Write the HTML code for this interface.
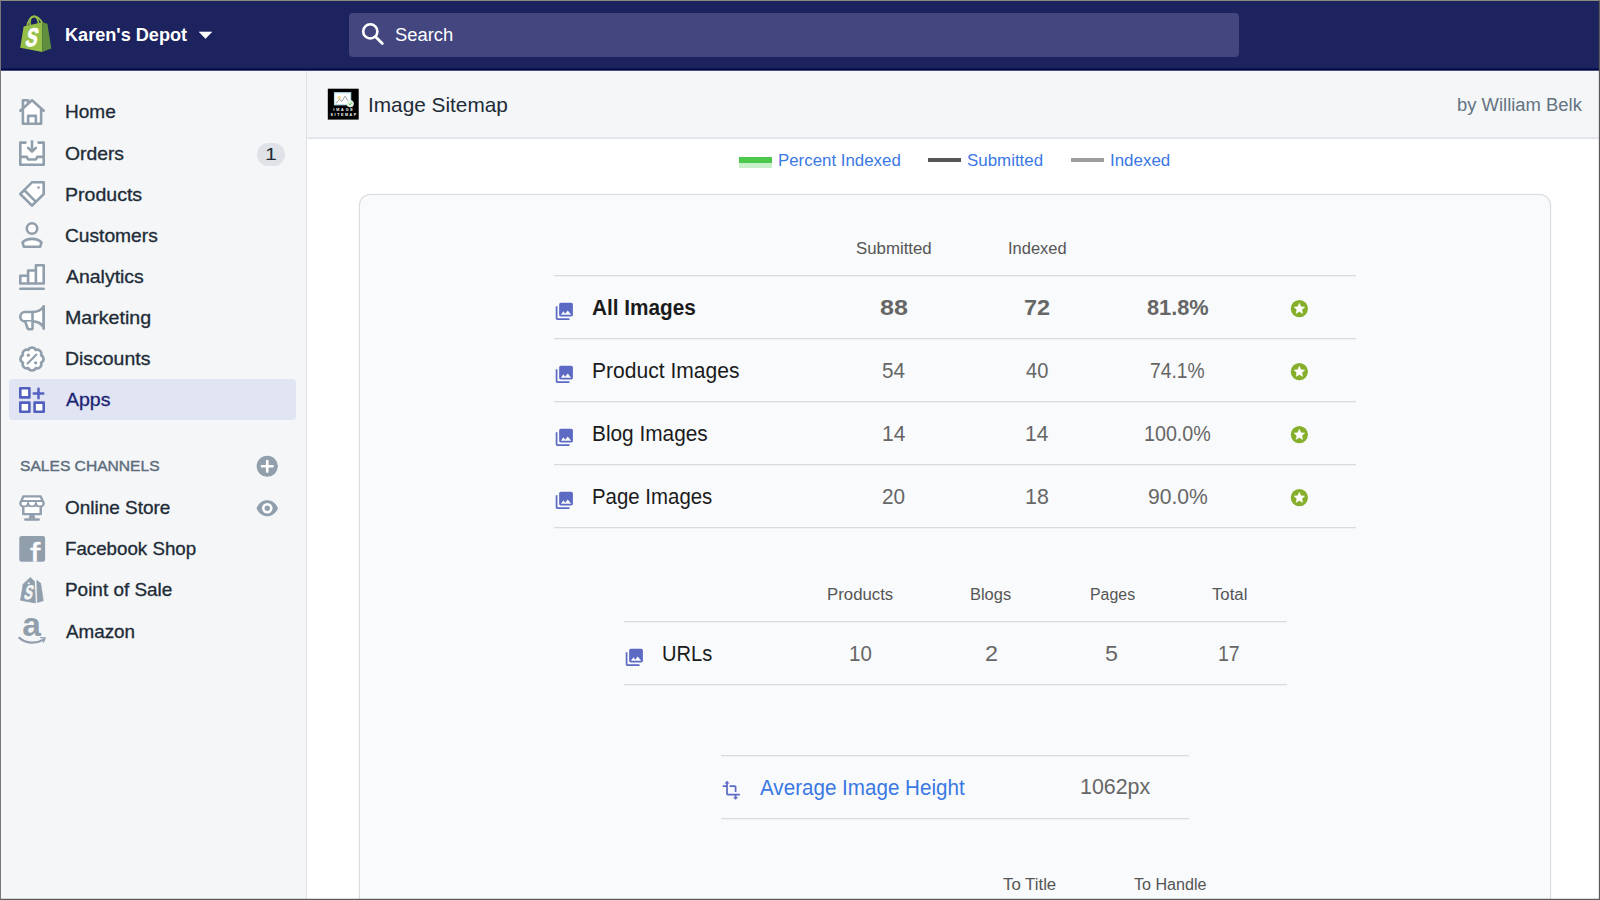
<!DOCTYPE html>
<html lang="en">
<head>
<meta charset="utf-8">
<title>Image Sitemap</title>
<style>
*{box-sizing:border-box;margin:0;padding:0}
html,body{width:1600px;height:900px;overflow:hidden;background:#fff}
body{font-family:"Liberation Sans",sans-serif;color:#212b36;position:relative}
.a{position:absolute}
.t{position:absolute;white-space:nowrap;line-height:1;transform-origin:0 0}
.hl{position:absolute;height:2px;background:linear-gradient(#d9dbde 0 50%,#f0f1f3 50% 100%)}
svg{position:absolute;overflow:visible}
</style>
</head>
<body>
<div class="a" style="left:0px;top:0px;width:1600px;height:70px;background:#1c235e;"></div>
<div class="a" style="left:349px;top:13px;width:890px;height:44px;background:#43467f;border-radius:4px"></div>
<div class="a" style="left:0px;top:70px;width:306px;height:830px;background:#f4f6f8;"></div>
<div class="a" style="left:306px;top:70px;width:1px;height:830px;background:#dfe3e8;"></div>
<div class="a" style="left:307px;top:70px;width:1293px;height:67px;background:#f4f6f8;"></div>
<div class="a" style="left:307px;top:137px;width:1293px;height:1px;background:#e6e9ed;"></div>
<div class="a" style="left:307px;top:138px;width:1293px;height:1px;background:#dfe3e8;"></div>
<div class="a" style="left:0px;top:68px;width:1600px;height:1px;background:#10164f;"></div>
<div class="a" style="left:0px;top:69px;width:1600px;height:1px;background:#02074a;"></div>
<div class="a" style="left:0px;top:70px;width:1600px;height:1px;background:#4b4f7e;"></div>
<div class="a" style="left:359px;top:194px;width:1192px;height:720px;background:#f9fafb;border:1px solid #d9dadc;border-radius:11.5px;box-shadow:0 0 1.2px rgba(0,0,0,.13)"></div>
<div class="t" style="left:65.13px;top:26.00px;font-size:18px;color:#fff;font-weight:bold;transform:scaleX(1.0065);">Karen's Depot</div>
<svg style="left:198px;top:31px" width="15" height="8" viewBox="0 0 15 8"><path d="M1.2 0.9H13.8L7.5 7.6Z" fill="#fff" stroke="#fff" stroke-width="0.5" stroke-linejoin="round"/></svg>
<div class="t" style="left:395.43px;top:25.76px;font-size:18px;color:#fff;transform:scaleX(1.0203);">Search</div>
<svg style="left:360px;top:21px" width="26" height="26" viewBox="0 0 26 26"><circle cx="10.3" cy="10.4" r="7.1" fill="none" stroke="#fff" stroke-width="2.6"/><path d="M15.6 15.8L22.3 22.6" stroke="#fff" stroke-width="2.8" stroke-linecap="round"/></svg>
<svg style="left:18px;top:13px" width="36" height="42" viewBox="18 13 36 42">
<path d="M31 27.5C28.5 20 31 16.3 33.8 16.3C36.8 16.3 38.4 20 38.6 24.8" fill="none" stroke="#95bf47" stroke-width="1.7"/>
<path d="M27.2 27C27.5 21 31 15.8 35 16.4C38.5 17 41 20.5 42.6 23.5" fill="none" stroke="#95bf47" stroke-width="1.7"/>
<path d="M23.6 26.6L42.2 22.3L42.2 51.9L20.2 47.7Z" fill="#95bf47"/>
<path d="M42.2 22.3L47.4 23.8L51.3 48.6L42.2 51.9Z" fill="#5e8e3e"/>
<text transform="translate(24.6,45.9) skewX(-13) scale(0.68,1)" font-family="Liberation Sans, sans-serif" font-size="25.6" font-weight="bold" fill="#fff" stroke="#fff" stroke-width="0.9">S</text>
</svg>
<div class="a" style="left:9px;top:379px;width:287px;height:41px;background:#e1e4f2;border-radius:4px"></div>
<div class="t" style="left:64.59px;top:103.71px;font-size:17.7px;color:#212b36;transform:scaleX(1.0751);-webkit-text-stroke:0.3px #212b36;">Home</div>
<div class="t" style="left:65.32px;top:145.98px;font-size:17.7px;color:#212b36;transform:scaleX(1.0918);-webkit-text-stroke:0.3px #212b36;">Orders</div>
<div class="t" style="left:65.00px;top:186.94px;font-size:17.7px;color:#212b36;transform:scaleX(1.1049);-webkit-text-stroke:0.3px #212b36;">Products</div>
<div class="t" style="left:65.06px;top:227.99px;font-size:17.7px;color:#212b36;transform:scaleX(1.0845);-webkit-text-stroke:0.3px #212b36;">Customers</div>
<div class="t" style="left:65.90px;top:269.38px;font-size:17.7px;color:#212b36;transform:scaleX(1.0992);-webkit-text-stroke:0.3px #212b36;">Analytics</div>
<div class="t" style="left:65.08px;top:309.98px;font-size:17.7px;color:#212b36;transform:scaleX(1.1083);-webkit-text-stroke:0.3px #212b36;">Marketing</div>
<div class="t" style="left:64.90px;top:350.94px;font-size:17.7px;color:#212b36;transform:scaleX(1.0994);-webkit-text-stroke:0.3px #212b36;">Discounts</div>
<div class="t" style="left:65.90px;top:392.47px;font-size:17.7px;color:#1c2573;transform:scaleX(1.1030);-webkit-text-stroke:0.3px #1c2573;">Apps</div>
<div class="a" style="left:257px;top:143px;width:28px;height:23px;background:#dfe3e8;border-radius:12px"></div>
<div class="t" style="left:264.93px;top:146.46px;font-size:16.5px;color:#212b36;transform:scaleX(1.2855);">1</div>
<div class="t" style="left:19.71px;top:457.57px;font-size:15.3px;color:#5c6c7c;transform:scaleX(1.0195);-webkit-text-stroke:0.4px #5c6c7c;">SALES CHANNELS</div>
<div class="t" style="left:65.34px;top:499.68px;font-size:17.7px;color:#212b36;transform:scaleX(1.0718);-webkit-text-stroke:0.3px #212b36;">Online Store</div>
<div class="t" style="left:65.06px;top:541.18px;font-size:17.7px;color:#212b36;transform:scaleX(1.0585);-webkit-text-stroke:0.3px #212b36;">Facebook Shop</div>
<div class="t" style="left:64.68px;top:582.10px;font-size:17.7px;color:#212b36;transform:scaleX(1.0701);-webkit-text-stroke:0.3px #212b36;">Point of Sale</div>
<div class="t" style="left:65.90px;top:623.63px;font-size:17.7px;color:#212b36;transform:scaleX(1.0634);-webkit-text-stroke:0.3px #212b36;">Amazon</div>
<svg style="left:19.3px;top:98.7px" width="26" height="26" viewBox="0 0 20 20"><path fill="#fff" d="M3 8L10 1.5L17 8V19H3Z"/><path fill="#919eab" fill-rule="evenodd" d="M19.664 8.252l-9-8a1 1 0 0 0-1.328 0L8 1.44V1a1 1 0 0 0-1-1H3a1 1 0 0 0-1 1v5.773L.336 8.252a1.001 1.001 0 0 0 1.328 1.496L2 9.449V19a1 1 0 0 0 1 1h14a1 1 0 0 0 1-1V9.449l.336.299a.997.997 0 0 0 1.411-.083 1.001 1.001 0 0 0-.083-1.413zM16 18h-2v-5a1 1 0 0 0-1-1H7a1 1 0 0 0-1 1v5H4V7.671l6-5.333 6 5.333V18zm-8 0v-4h4v4H8zM4 2h2v1.218L4 4.996V2z"/></svg>
<svg style="left:19.3px;top:140px" width="26" height="26" viewBox="0 0 20 20"><path fill="#fff" d="M1 2H19V19H1Z"/><path fill="#919eab" fill-rule="evenodd" d="M2 18v-4h3.382l.723 1.447c.17.339.516.553.895.553h6c.379 0 .725-.214.895-.553L14.618 14H18v4H2zM19 1a1 1 0 0 1 1 1v17a1 1 0 0 1-1 1H1a1 1 0 0 1-1-1V2a1 1 0 0 1 1-1h4a1 1 0 0 1 0 2H2v9h4c.379 0 .725.214.895.553L7.618 14h4.764l.723-1.447c.17-.339.516-.553.895-.553h4V3h-3a1 1 0 0 1 0-2h4zM6.293 6.707a.999.999 0 1 1 1.414-1.414L9 6.586V1a1 1 0 0 1 2 0v5.586l1.293-1.293a.999.999 0 1 1 1.414 1.414l-3 3a.997.997 0 0 1-1.414 0l-3-3z"/></svg>
<svg style="left:19.3px;top:181.2px" width="26" height="26" viewBox="0 0 20 20"><path fill="#fff" d="M10 1H19V10L10 19L1 10Z"/><path fill="#919eab" fill-rule="evenodd" d="M19 0h-9c-.265 0-.52.106-.707.293l-9 9a.999.999 0 0 0 0 1.414l9 9a.997.997 0 0 0 1.414 0l9-9A.997.997 0 0 0 20 10V1a1 1 0 0 0-1-1zm-9 17.586L2.414 10 4 8.414 11.586 16 10 17.586zm8-8l-5 5L5.414 7l5-5H18v7.586zM15 6a1 1 0 1 0 0-2 1 1 0 0 0 0 2"/></svg>
<svg style="left:19.3px;top:222.4px" width="26" height="26" viewBox="0 0 20 20"><circle cx="10" cy="5" r="4" fill="#fff" stroke="#919eab" stroke-width="2"/><path d="M2.7 15.7C4.6 13.7 7 13 10 13S15.4 13.7 17.3 15.7L16.3 19H3.7Z" fill="#fff" stroke="#919eab" stroke-width="2" stroke-linecap="round" stroke-linejoin="round" /></svg>
<svg style="left:19.3px;top:263.7px" width="26" height="26" viewBox="0 0 20 20"><path fill="#fff" d="M1 9H7V5H13V1H19V15H1Z"/><path fill="#919eab" fill-rule="evenodd" d="M19 18a1 1 0 0 1 0 2H1a1 1 0 0 1 0-2h18zm0-18a1 1 0 0 1 1 1v14a1 1 0 0 1-1 1H1a1 1 0 0 1-1-1V9a1 1 0 0 1 1-1h5V5a1 1 0 0 1 1-1h5V1a1 1 0 0 1 1-1h6zM2 14h4v-4H2v4zm6 0h4V6H8v8zm6 0h4V2h-4v12z"/></svg>
<svg style="left:19.3px;top:305px" width="26" height="26" viewBox="0 0 20 20"><path d="M10.4 5.4H4.6a3.6 3.6 0 0 0 0 7.2H10.4C13.8 12.6 16.8 13.8 19 17V1.4C16.8 4.4 13.8 5.4 10.4 5.4Z" fill="#fff" stroke="#919eab" stroke-width="2" stroke-linecap="round" stroke-linejoin="round" /><path d="M10.4 5.4V12.6" fill="none" stroke="#919eab" stroke-width="2" stroke-linecap="round" stroke-linejoin="round" /><path d="M4.8 12.8L6.6 17.9a1 1 0 0 0 .95 .7H9.4a1 1 0 0 0 1-1V12.6" fill="#fff" stroke="#919eab" stroke-width="2" stroke-linecap="round" stroke-linejoin="round" /><path d="M19 1V18.2" fill="none" stroke="#919eab" stroke-width="2" stroke-linecap="round" stroke-linejoin="round" /></svg>
<svg style="left:19.3px;top:346.1px" width="26" height="26" viewBox="0 0 20 20"><path d="M12.87 3.07A3.1 3.1 0 0 1 16.93 7.13A3.1 3.1 0 0 1 16.93 12.87A3.1 3.1 0 0 1 12.87 16.93A3.1 3.1 0 0 1 7.13 16.93A3.1 3.1 0 0 1 3.07 12.87A3.1 3.1 0 0 1 3.07 7.13A3.1 3.1 0 0 1 7.13 3.07A3.1 3.1 0 0 1 12.87 3.07Z" fill="#fff" stroke="#919eab" stroke-width="2" stroke-linecap="round" stroke-linejoin="round" /><path d="M6.6 13.4L13.4 6.6" fill="none" stroke="#919eab" stroke-width="1.7" stroke-linecap="round" stroke-linejoin="round" /><circle cx="7.2" cy="7.1" r="1.25" fill="#919eab"/><circle cx="12.8" cy="12.9" r="1.25" fill="#919eab"/></svg>
<svg style="left:19.3px;top:387.1px" width="26" height="26" viewBox="0 0 20 20"><g fill="#fff" stroke="#5360c0" stroke-width="2" stroke-linejoin="round"><rect x="1" y="1" width="7" height="7"/><rect x="1" y="12" width="7" height="7"/><rect x="12" y="12" width="7" height="7"/></g><path d="M11.3 5H18.7M15 1.3V8.7" fill="none" stroke="#5360c0" stroke-width="1.9" stroke-linecap="round" stroke-linejoin="round" /></svg>
<svg style="left:254.15px;top:453.35px" width="26.5" height="26.5" viewBox="0 0 20 20"><path fill="#919eab" d="M10 2a8 8 0 1 0 0 16 8 8 0 0 0 0-16z"/><path fill="#fff" d="M14 11h-3v3a1 1 0 1 1-2 0v-3H6a1 1 0 1 1 0-2h3V6a1 1 0 1 1 2 0v3h3a1 1 0 1 1 0 2z"/></svg>
<svg style="left:254.15px;top:494.5px" width="26.5" height="26.5" viewBox="0 0 20 20"><path fill="#919eab" d="M17.928 9.628C17.836 9.399 15.611 4 9.999 4S2.162 9.399 2.07 9.628a1.017 1.017 0 0 0 0 .744C2.162 10.601 4.387 16 9.999 16s7.837-5.399 7.929-5.628a1.017 1.017 0 0 0 0-.744z"/><circle cx="10" cy="10" r="4" fill="#fff"/><circle cx="10" cy="10" r="2" fill="#919eab"/></svg>
<svg style="left:19.4px;top:495px" width="26" height="26" viewBox="0 0 20 20"><path d="M3.4 1H16.6L19 6.3C19 7.8 17.7 9 16 9S13 7.8 13 6.3C13 7.8 11.7 9 10 9S7 7.8 7 6.3C7 7.8 5.7 9 4 9S1 7.8 1 6.3Z" fill="#fff" stroke="#919eab" stroke-width="1.8" stroke-linecap="round" stroke-linejoin="round" /><path d="M1.8 4.6H18.2" fill="none" stroke="#919eab" stroke-width="1.6" stroke-linecap="round" stroke-linejoin="round" /><path d="M3.3 9.3V14.7H16.7V9.3" fill="#fff" stroke="#919eab" stroke-width="1.9" stroke-linecap="round" stroke-linejoin="round" /><path d="M8.2 15.3H11.8L12.6 18.2H7.4Z" fill="#919eab"/><path d="M4.8 18.9H15.2" fill="none" stroke="#919eab" stroke-width="1.9" stroke-linecap="round" stroke-linejoin="round" /></svg>
<svg style="left:19px;top:535px" width="27" height="28" viewBox="19 535 27 28">
<rect x="19.3" y="536.1" width="25.8" height="25.7" rx="2.2" fill="#919eab"/>
<clipPath id="fbc"><rect x="19.3" y="536.1" width="25.8" height="25.7"/></clipPath>
<g clip-path="url(#fbc)"><text transform="translate(29.9,565.3) scale(1.16,1)" font-family="Liberation Sans, sans-serif" font-size="32" fill="#fff" stroke="#fff" stroke-width="0.35">f</text></g>
</svg>
<svg style="left:19px;top:575px" width="27" height="30" viewBox="19 575 27 30">
<path d="M30.4 577.4L34.4 581.6L35.4 602.9L20.6 600.2L23.2 584.2Z" fill="#919eab" stroke="#919eab" stroke-width="0.8" stroke-linejoin="round"/>
<path d="M36.8 580.3L40.7 583.3L43.3 600.7L37.4 602.5Z" fill="#919eab" stroke="#919eab" stroke-width="0.6" stroke-linejoin="round"/>
<circle cx="28.7" cy="583.2" r="1.05" fill="#f4f6f8"/>
<text transform="translate(23.3,599.2) skewX(-14) scale(0.64,1)" font-family="Liberation Sans, sans-serif" font-size="19.6" font-weight="bold" fill="#f4f6f8" stroke="#f4f6f8" stroke-width="0.7">S</text>
</svg>
<svg style="left:18px;top:612px" width="30" height="34" viewBox="18 612 30 34">
<text x="22.3" y="636.2" font-family="Liberation Sans, sans-serif" font-size="33.5" font-weight="bold" fill="#919eab">a</text>
<path d="M19.3 637.8C26 643.6 35.5 644.2 43.6 639.6" fill="none" stroke="#919eab" stroke-width="2.2" stroke-linecap="round"/>
<path d="M40.6 637.6L45.2 637.9L43.4 642" fill="none" stroke="#919eab" stroke-width="1.4" stroke-linecap="round" stroke-linejoin="round"/>
</svg>
<svg style="left:327px;top:88px" width="33" height="33" viewBox="327 88 33 33">
<rect x="327.8" y="88.7" width="30.9" height="30.9" fill="#000"/>
<rect x="334.6" y="92.8" width="16" height="11.9" fill="#fff" stroke="#bfe2ec" stroke-width="1.3"/>
<circle cx="339.3" cy="97.6" r="1.6" fill="#f3d88a"/>
<path d="M336 103.4L339.4 99.2L341.8 101.4L345 96.2L348.6 101.6" fill="none" stroke="#80858c" stroke-width="0.8"/>
<circle cx="350.2" cy="103.7" r="3.3" fill="#def1dc" stroke="#eef8ed" stroke-width="0.7"/>
<path d="M348.6 103.7L349.8 104.9L351.9 102.6" fill="none" stroke="#5cb860" stroke-width="1"/>
<text x="344.0" y="111.3" text-anchor="middle" font-family="Liberation Sans, sans-serif" font-weight="bold" font-size="3.7" letter-spacing="1.85" fill="#fff">IMAGE</text>
<text x="344.2" y="116.1" text-anchor="middle" font-family="Liberation Sans, sans-serif" font-weight="bold" font-size="3.7" letter-spacing="1.55" fill="#fff">SITEMAP</text>
</svg>
<div class="t" style="left:368.12px;top:94.12px;font-size:21px;color:#212b36;transform:scaleX(0.9902);">Image Sitemap</div>
<div class="t" style="left:1456.63px;top:95.92px;font-size:18px;color:#637381;transform:scaleX(1.0238);">by William Belk</div>
<div class="a" style="left:739px;top:157px;width:33.3px;height:6px;background:#4bc84b;"></div>
<div class="a" style="left:739px;top:163px;width:33.3px;height:5px;background:#c9f0c9;"></div>
<div class="t" style="left:778.13px;top:152.72px;font-size:16.6px;color:#3a78e4;transform:scaleX(1.0159);">Percent Indexed</div>
<div class="a" style="left:927.6px;top:157.5px;width:33.7px;height:4.6px;background:#555;"></div>
<div class="t" style="left:967.43px;top:152.72px;font-size:16.6px;color:#3a78e4;transform:scaleX(1.0182);">Submitted</div>
<div class="a" style="left:1070.6px;top:157.5px;width:33.4px;height:4.6px;background:#9e9e9e;"></div>
<div class="t" style="left:1109.83px;top:152.67px;font-size:16.6px;color:#3a78e4;transform:scaleX(1.0206);">Indexed</div>
<div class="hl" style="left:554px;top:275px;width:802px"></div>
<div class="hl" style="left:554px;top:338px;width:802px"></div>
<div class="hl" style="left:554px;top:401px;width:802px"></div>
<div class="hl" style="left:554px;top:464px;width:802px"></div>
<div class="hl" style="left:554px;top:527px;width:802px"></div>
<div class="t" style="left:856.02px;top:240.92px;font-size:15.8px;color:#555;transform:scaleX(1.0640);">Submitted</div>
<div class="t" style="left:1007.94px;top:240.50px;font-size:15.8px;color:#555;transform:scaleX(1.0433);">Indexed</div>
<div class="t" style="left:591.64px;top:297.57px;font-size:21.4px;color:#1b1b1b;font-weight:bold;transform:scaleX(0.9711);">All Images</div>
<svg style="left:553.98px;top:300.68px" width="20.64" height="20.64" viewBox="0 0 24 24"><path d="M22 16V4c0-1.1-.9-2-2-2H8c-1.1 0-2 .9-2 2v12c0 1.1.9 2 2 2h12c1.1 0 2-.9 2-2zm-11-4l2.03 2.71L16 11l4 5H8l3-4zM2 6v14c0 1.1.9 2 2 2h14v-2H4V6H2z" fill="#5c6ac4"/></svg>
<div class="t" style="left:879.61px;top:298.14px;font-size:21.4px;color:#666;font-weight:bold;transform:scaleX(1.1734);">88</div>
<div class="t" style="left:1024.22px;top:298.14px;font-size:21.4px;color:#666;font-weight:bold;transform:scaleX(1.0923);">72</div>
<div class="t" style="left:1147.12px;top:298.14px;font-size:21.4px;color:#666;font-weight:bold;transform:scaleX(1.0173);">81.8%</div>
<svg style="left:0;top:0" width="1600" height="900" viewBox="0 0 1600 900"><circle cx="1299.35" cy="308.55" r="8.6" fill="#85ae2b"/><polygon points="1299.35,303.25 1300.88,306.75 1304.68,307.12 1301.82,309.65 1302.64,313.38 1299.35,311.45 1296.06,313.38 1296.88,309.65 1294.02,307.12 1297.82,306.75" fill="#fff" stroke="#fff" stroke-width="0.5" stroke-linejoin="round"/></svg>
<div class="t" style="left:591.78px;top:361.21px;font-size:21.4px;color:#1b1b1b;transform:scaleX(0.9840);">Product Images</div>
<svg style="left:553.98px;top:363.68px" width="20.64" height="20.64" viewBox="0 0 24 24"><path d="M22 16V4c0-1.1-.9-2-2-2H8c-1.1 0-2 .9-2 2v12c0 1.1.9 2 2 2h12c1.1 0 2-.9 2-2zm-11-4l2.03 2.71L16 11l4 5H8l3-4zM2 6v14c0 1.1.9 2 2 2h14v-2H4V6H2z" fill="#5c6ac4"/></svg>
<div class="t" style="left:881.76px;top:361.06px;font-size:21.4px;color:#666;transform:scaleX(0.9686);">54</div>
<div class="t" style="left:1026.42px;top:360.84px;font-size:21.4px;color:#666;transform:scaleX(0.9383);">40</div>
<div class="t" style="left:1150.09px;top:360.93px;font-size:21.4px;color:#666;transform:scaleX(0.9006);">74.1%</div>
<svg style="left:0;top:0" width="1600" height="900" viewBox="0 0 1600 900"><circle cx="1299.35" cy="371.55" r="8.6" fill="#85ae2b"/><polygon points="1299.35,366.25 1300.88,369.75 1304.68,370.12 1301.82,372.65 1302.64,376.38 1299.35,374.45 1296.06,376.38 1296.88,372.65 1294.02,370.12 1297.82,369.75" fill="#fff" stroke="#fff" stroke-width="0.5" stroke-linejoin="round"/></svg>
<div class="t" style="left:591.81px;top:423.96px;font-size:21.4px;color:#1b1b1b;transform:scaleX(0.9733);">Blog Images</div>
<svg style="left:553.98px;top:426.68px" width="20.64" height="20.64" viewBox="0 0 24 24"><path d="M22 16V4c0-1.1-.9-2-2-2H8c-1.1 0-2 .9-2 2v12c0 1.1.9 2 2 2h12c1.1 0 2-.9 2-2zm-11-4l2.03 2.71L16 11l4 5H8l3-4zM2 6v14c0 1.1.9 2 2 2h14v-2H4V6H2z" fill="#5c6ac4"/></svg>
<div class="t" style="left:881.71px;top:423.75px;font-size:21.4px;color:#666;transform:scaleX(0.9812);">14</div>
<div class="t" style="left:1025.27px;top:423.75px;font-size:21.4px;color:#666;transform:scaleX(0.9812);">14</div>
<div class="t" style="left:1144.26px;top:423.53px;font-size:21.4px;color:#666;transform:scaleX(0.9206);">100.0%</div>
<svg style="left:0;top:0" width="1600" height="900" viewBox="0 0 1600 900"><circle cx="1299.35" cy="434.55" r="8.6" fill="#85ae2b"/><polygon points="1299.35,429.25 1300.88,432.75 1304.68,433.12 1301.82,435.65 1302.64,439.38 1299.35,437.45 1296.06,439.38 1296.88,435.65 1294.02,433.12 1297.82,432.75" fill="#fff" stroke="#fff" stroke-width="0.5" stroke-linejoin="round"/></svg>
<div class="t" style="left:592.08px;top:486.56px;font-size:21.4px;color:#1b1b1b;transform:scaleX(0.9545);">Page Images</div>
<svg style="left:553.98px;top:489.68px" width="20.64" height="20.64" viewBox="0 0 24 24"><path d="M22 16V4c0-1.1-.9-2-2-2H8c-1.1 0-2 .9-2 2v12c0 1.1.9 2 2 2h12c1.1 0 2-.9 2-2zm-11-4l2.03 2.71L16 11l4 5H8l3-4zM2 6v14c0 1.1.9 2 2 2h14v-2H4V6H2z" fill="#5c6ac4"/></svg>
<div class="t" style="left:882.01px;top:487.08px;font-size:21.4px;color:#666;transform:scaleX(0.9707);">20</div>
<div class="t" style="left:1025.05px;top:487.09px;font-size:21.4px;color:#666;transform:scaleX(0.9988);">18</div>
<div class="t" style="left:1147.70px;top:487.04px;font-size:21.4px;color:#666;transform:scaleX(0.9877);">90.0%</div>
<svg style="left:0;top:0" width="1600" height="900" viewBox="0 0 1600 900"><circle cx="1299.35" cy="497.55" r="8.6" fill="#85ae2b"/><polygon points="1299.35,492.25 1300.88,495.75 1304.68,496.12 1301.82,498.65 1302.64,502.38 1299.35,500.45 1296.06,502.38 1296.88,498.65 1294.02,496.12 1297.82,495.75" fill="#fff" stroke="#fff" stroke-width="0.5" stroke-linejoin="round"/></svg>
<div class="hl" style="left:624px;top:621px;width:662.5px"></div>
<div class="hl" style="left:624px;top:684px;width:662.5px"></div>
<div class="t" style="left:827.38px;top:587.02px;font-size:15.8px;color:#555;transform:scaleX(1.0630);">Products</div>
<div class="t" style="left:970.43px;top:587.02px;font-size:15.8px;color:#555;transform:scaleX(1.0407);">Blogs</div>
<div class="t" style="left:1089.51px;top:586.75px;font-size:15.8px;color:#555;transform:scaleX(1.0067);">Pages</div>
<div class="t" style="left:1211.88px;top:587.02px;font-size:15.8px;color:#555;transform:scaleX(1.0598);">Total</div>
<div class="t" style="left:662.23px;top:643.66px;font-size:21.4px;color:#1b1b1b;transform:scaleX(0.9387);">URLs</div>
<svg style="left:624.13px;top:646.50px" width="20.64" height="20.64" viewBox="0 0 24 24"><path d="M22 16V4c0-1.1-.9-2-2-2H8c-1.1 0-2 .9-2 2v12c0 1.1.9 2 2 2h12c1.1 0 2-.9 2-2zm-11-4l2.03 2.71L16 11l4 5H8l3-4zM2 6v14c0 1.1.9 2 2 2h14v-2H4V6H2z" fill="#5c6ac4"/></svg>
<div class="t" style="left:849.05px;top:643.91px;font-size:21.4px;color:#666;transform:scaleX(0.9583);">10</div>
<div class="t" style="left:984.53px;top:643.94px;font-size:21.4px;color:#666;transform:scaleX(1.0917);">2</div>
<div class="t" style="left:1104.53px;top:644.16px;font-size:21.4px;color:#666;transform:scaleX(1.0900);">5</div>
<div class="t" style="left:1217.90px;top:644.16px;font-size:21.4px;color:#666;transform:scaleX(0.9121);">17</div>
<div class="hl" style="left:721px;top:755px;width:467.5px"></div>
<div class="hl" style="left:721px;top:818px;width:467.5px"></div>
<div class="t" style="left:759.99px;top:777.69px;font-size:21.4px;color:#3a78e4;transform:scaleX(0.9632);">Average Image Height</div>
<svg style="left:720.9px;top:780.2px" width="20.64" height="20.64" viewBox="0 0 24 24"><path d="M22 18v-2H8V4h2L7 1 4 4h2v2H2v2h4v8c0 1.1.9 2 2 2h8v2h-2l3 3 3-3h-2v-2h4zM10 8h6v6h2V8c0-1.1-.9-2-2-2h-6v2z" fill="#5c6ac4"/></svg>
<div class="t" style="left:1079.53px;top:777.14px;font-size:21.4px;color:#666;transform:scaleX(0.9986);">1062px</div>
<div class="t" style="left:1003.32px;top:876.97px;font-size:15.8px;color:#555;transform:scaleX(1.0631);">To Title</div>
<div class="t" style="left:1134.26px;top:876.97px;font-size:15.8px;color:#555;transform:scaleX(1.0196);">To Handle</div>
<div class="a" style="left:0;top:0;width:1600px;height:900px;border:1px solid #5a5a5a;border-top-color:#8a8a80;border-left-color:#777"></div>
<div class="a" style="left:0;top:898px;width:1600px;height:1px;background:rgba(80,80,80,.2)"></div>
<div class="a" style="left:1598px;top:0;width:1px;height:900px;background:rgba(80,80,80,.15)"></div>
</body>
</html>
